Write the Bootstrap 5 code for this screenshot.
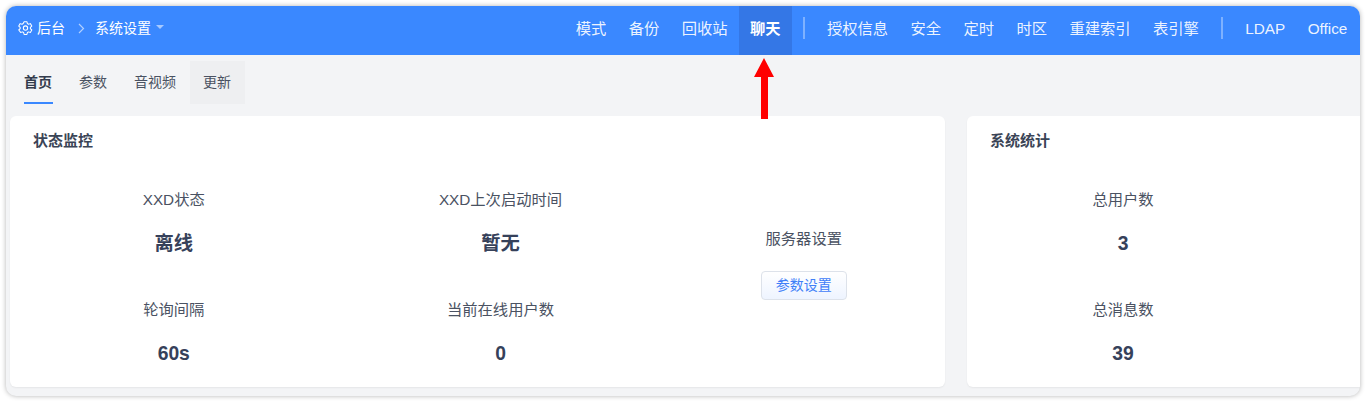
<!DOCTYPE html>
<html lang="zh-CN">
<head>
  <meta charset="UTF-8">
  <title>系统设置</title>
  <link href="https://cdn.jsdelivr.net/npm/bootstrap@5.3.2/dist/css/bootstrap.min.css" rel="stylesheet">
  <style>
    html, body { height: 402px; overflow: hidden; }
    body {
      background: #fff;
      padding: 6px;
      font-family: "Liberation Sans", "Noto Sans CJK SC", sans-serif;
      color: #3c4658;
    }
    .app-window {
      height: 390px;
      background: #f3f4f6;
      border-radius: 10px;
      overflow: hidden;
      box-shadow: 0 0 5px rgba(0,0,0,.3);
      position: relative;
    }
    .top-bar { height: 49px; background: #3a88ff; color: #fff; }
    .crumb { font-size: 14px; padding: 0 0 5px 12px; }
    .crumb-icon { margin-right: 4px; }
    .crumb-sep { margin: 0 10px 0 13px; }
    .crumb-caret {
      width: 0; height: 0; margin-left: 5px; margin-top: -2px;
      border-left: 4px solid transparent;
      border-right: 4px solid transparent;
      border-top: 4px solid rgba(255,255,255,.55);
    }
    .top-link {
      height: 49px;
      padding: 0 11.2px 3px;
      font-size: 15.3px;
      color: rgba(255,255,255,.92);
      text-decoration: none;
    }
    .top-link.on { background: #3477e6; color: #fff; font-weight: 700; }
    .top-sep { width: 2px; height: 22px; margin: 0 11px 5px; background: rgba(255,255,255,.35); }
    .top-links { padding-right: 1.5px; }
    .tab-row { height: 49px; padding: 6px 0 0 4.5px; }
    .tab-link {
      height: 43px;
      padding: 0 13.5px;
      font-size: 14px;
      color: #4a5262;
      text-decoration: none;
      position: relative;
    }
    .tab-link.on { color: #333c4d; font-weight: 700; }
    .tab-link.on::after {
      content: "";
      position: absolute;
      left: 13px; right: 13px; bottom: 0;
      height: 2px;
      background: #3a88ff;
    }
    .tab-link.hov { background: #eeeff1; }
    .main-row { padding: 12px 0 0 4px; gap: 22px; }
    .stat-card {
      height: 271px;
      border: 0;
      border-radius: 6px;
      box-shadow: 0 1px 2px rgba(0,0,0,.06);
      padding: 15px 0 0 23px;
    }
    .stat-left { width: 935px; flex: none; }
    .stat-right { flex: 1; border-radius: 6px 0 0 6px; }
    .card-head { font-size: 15px; line-height: 20px; font-weight: 700; color: #3a4456; margin-bottom: 39px; }
    .stat-grid { display: grid; row-gap: 42px; text-align: center; }
    .stat-left .stat-grid { grid-template-columns: 281.5px 372px 234.5px; }
    .stat-right .stat-grid { grid-template-columns: 266px; }
    .stat-label { font-size: 15.3px; line-height: 20px; color: #4a5262; }
    .stat-value { font-size: 19.3px; line-height: 28px; font-weight: 700; color: #36415a; margin-top: 20px; }
    .stat-action { grid-column: 3; grid-row: 1 / span 2; padding-top: 39px; }
    .param-btn {
      display: block;
      width: 86px; height: 29px;
      margin: 22px auto 0;
      padding: 0;
      font-size: 14px;
      line-height: 27px;
      color: #4080f8;
      background: linear-gradient(#fff, #eef4ff);
      border: 1px solid #dde2ea;
      border-radius: 4px;
    }
    .red-arrow { position: absolute; left: 747px; top: 52px; }
  </style>
</head>
<body>
<div class="app-window d-flex flex-column">
  <div class="top-bar d-flex justify-content-between align-items-center">
    <div class="crumb d-flex align-items-center">
      <svg class="crumb-icon" width="15" height="15" viewBox="0 0 16 16" fill="none" stroke="#fff" stroke-width="1.100" stroke-linejoin="round">
        <path d="M6.500 .7h3l.5 2 1.200.7 2-.6 1.500 2.600-1.500 1.400v1.400l1.500 1.400-1.500 2.600-2-.6-1.200.7-.5 2h-3l-.5-2-1.200-.7-2 .6L.8 9.600l1.500-1.400V6.800L.8 5.400l1.500-2.600 2 .6 1.200-.7z"/>
        <circle cx="8" cy="7.500" r="2.300"/>
      </svg>
      <span>后台</span>
      <svg class="crumb-sep" width="7" height="11" viewBox="0 0 7 11" fill="none" stroke="rgba(255,255,255,.6)" stroke-width="1.200"><path d="M1 1l4.500 4.500L1 10"/></svg>
      <span>系统设置</span>
      <span class="crumb-caret"></span>
    </div>
    <div class="top-links d-flex align-items-center">
      <a class="top-link d-flex align-items-center" href="#">模式</a>
      <a class="top-link d-flex align-items-center" href="#">备份</a>
      <a class="top-link d-flex align-items-center" href="#">回收站</a>
      <a class="top-link on d-flex align-items-center" href="#">聊天</a>
      <span class="top-sep"></span>
      <a class="top-link d-flex align-items-center" href="#">授权信息</a>
      <a class="top-link d-flex align-items-center" href="#">安全</a>
      <a class="top-link d-flex align-items-center" href="#">定时</a>
      <a class="top-link d-flex align-items-center" href="#">时区</a>
      <a class="top-link d-flex align-items-center" href="#">重建索引</a>
      <a class="top-link d-flex align-items-center" href="#">表引擎</a>
      <span class="top-sep"></span>
      <a class="top-link d-flex align-items-center" href="#">LDAP</a>
      <a class="top-link d-flex align-items-center" href="#">Office</a>
    </div>
  </div>

  <div class="tab-row d-flex">
    <a class="tab-link on d-flex align-items-center" href="#">首页</a>
    <a class="tab-link d-flex align-items-center" href="#">参数</a>
    <a class="tab-link d-flex align-items-center" href="#">音视频</a>
    <a class="tab-link hov d-flex align-items-center" href="#">更新</a>
  </div>

  <div class="main-row d-flex">
    <div class="card stat-card stat-left">
      <div class="card-head">状态监控</div>
      <div class="stat-grid">
        <div><div class="stat-label">XXD状态</div><div class="stat-value">离线</div></div>
        <div><div class="stat-label">XXD上次启动时间</div><div class="stat-value">暂无</div></div>
        <div class="stat-action">
          <div class="stat-label">服务器设置</div>
          <button class="btn param-btn" type="button">参数设置</button>
        </div>
        <div><div class="stat-label">轮询间隔</div><div class="stat-value">60s</div></div>
        <div><div class="stat-label">当前在线用户数</div><div class="stat-value">0</div></div>
      </div>
    </div>
    <div class="card stat-card stat-right">
      <div class="card-head">系统统计</div>
      <div class="stat-grid">
        <div><div class="stat-label">总用户数</div><div class="stat-value">3</div></div>
        <div><div class="stat-label">总消息数</div><div class="stat-value">39</div></div>
      </div>
    </div>
  </div>

  <svg class="red-arrow" width="22" height="62" viewBox="0 0 22 62"><path d="M11 0L21 19H15V61H8V19H1z" fill="#ff0000"/></svg>
</div>
<script src="https://cdn.jsdelivr.net/npm/bootstrap@5.3.2/dist/js/bootstrap.bundle.min.js"></script>
</body>
</html>
